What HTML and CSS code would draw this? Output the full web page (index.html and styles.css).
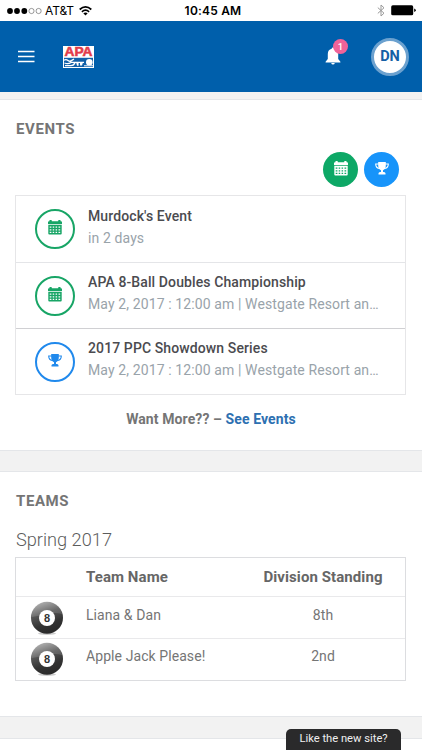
FILE: index.html
```html
<!DOCTYPE html>
<html lang="en">
<head>
<meta charset="utf-8">
<meta name="viewport" content="width=device-width, initial-scale=1">
<title>APA Member Services</title>
<link rel="stylesheet" href="styles.css">
</head>
<body>
<svg class="defs" aria-hidden="true">
  <symbol id="calendar" viewBox="0 0 14 15">
    <path fill="currentColor" fill-rule="evenodd" d="M0 2.2Q0 1.2 1 1.2H1.4V.5Q1.4 0 2 0H3.2Q3.8 0 3.8.5V1.2H10.2V.5Q10.2 0 10.8 0H12Q12.6 0 12.6.5V1.2H13Q14 1.2 14 2.2V4H0ZM.3 4.7H13.7V13.5Q13.7 14.5 12.7 14.5H1.3Q.3 14.5 .3 13.5ZM1.7 6.6V7.8H3.4V6.6ZM4.7 6.6V7.8H6.2V6.6ZM7.6 6.6V7.8H9.1V6.6ZM10.5 6.6V7.8H12.2V6.6ZM1.7 9.2V10.4H3.4V9.2ZM4.7 9.2V10.4H6.2V9.2ZM7.6 9.2V10.4H9.1V9.2ZM10.5 9.2V10.4H12.2V9.2ZM1.7 11.8V13H3.4V11.8ZM4.7 11.8V13H6.2V11.8ZM7.6 11.8V13H9.1V11.8ZM10.5 11.8V13H12.2V11.8Z"/>
  </symbol>
  <symbol id="trophy" viewBox="0 0 14 13">
    <path fill="none" stroke="currentColor" stroke-width="1.1" d="M4 2H.7Q.7 6.3 5 6.5M10 2H13.3Q13.3 6.3 9 6.5"/>
    <path fill="currentColor" d="M3.2 0H10.8V3.5Q10.8 7.2 8 8.2V10H9Q10.3 10.2 10.5 11.2V12.6H3.5V11.2Q3.7 10.2 5 10H6V8.2Q3.2 7.2 3.2 3.5Z"/>
  </symbol>
  <symbol id="ball" viewBox="0 0 34 35">
    <ellipse cx="17" cy="32.6" rx="9" ry="1.4" fill="#ccc"/>
    <circle cx="17" cy="16.8" r="16" fill="url(#shade)"/>
    <path fill="#fff" opacity=".13" d="M2 16A15 15 0 0 1 32 13Q25 11 17 13T2 16"/>
    <circle cx="17" cy="17" r="8" fill="#fff"/>
  </symbol>
  <linearGradient id="shade" x1=".25" y1="0" x2=".6" y2="1">
    <stop offset="0" stop-color="#aaa"/><stop offset=".38" stop-color="#555"/><stop offset=".7" stop-color="#333"/><stop offset="1" stop-color="#292929"/>
  </linearGradient>
</svg>

<div class="status">
  <div class="status-left">
    <svg width="36" height="8" viewBox="0 0 36 8"><g><circle cx="3" cy="4" r="2.9"/><circle cx="10" cy="4" r="2.9"/><circle cx="17.3" cy="4" r="2.9"/></g><g fill="none" stroke="#555" stroke-width=".6"><circle cx="24.5" cy="4" r="2.6"/><circle cx="31.6" cy="4" r="2.6"/></g></svg>
    <span class="carrier">AT&amp;T</span>
    <svg class="wifi" width="13" height="10" viewBox="0 0 13 10"><path fill="none" stroke="#000" stroke-width="1.7" d="M.7 3.5Q6.5-1.7 12.3 3.5M2.9 5.8Q6.5 2.6 10.1 5.8"/><path d="M4.3 7.3Q6.5 5.5 8.7 7.3L6.5 9.6Z"/></svg>
  </div>
  <span class="clock">10:45 AM</span>
  <div class="status-right">
    <svg width="8" height="13" viewBox="0 0 8 13"><path fill="none" stroke="#999" stroke-width="1" d="M.8 3.6 7 9.2 4 12V1L7 3.8.8 9.4"/></svg>
    <svg width="25" height="11" viewBox="0 0 25 11"><rect x=".2" y=".3" width="22" height="10" rx="1.6"/><path d="M23.2 3.5Q24.8 4 24.8 5.3T23.2 7.1Z"/></svg>
  </div>
</div>

<header class="header">
  <svg class="menu" width="17" height="13" viewBox="0 0 17 13"><path stroke="#fff" stroke-width="1.6" d="M0 1.5H16.5M0 6.5H16.5M0 11.5H16.5"/></svg>
  <svg class="logo" width="31" height="22" viewBox="0 0 31 22">
    <rect width="31" height="22" fill="#fff"/>
    <text x="15.5" y="10.4" text-anchor="middle" textLength="28" lengthAdjust="spacingAndGlyphs" class="logo-text">APA</text>
    <rect x="1" y="11.8" width="29" height="9.2" fill="#1260a8"/>
    <path fill="none" stroke="#fff" stroke-width="1.3" d="M1 14.2Q3 12.8 5 14.4T8.5 14.6L11 13M1.5 17Q5 18.6 8 16.4H21M2 19.6H8Q11 19.6 12 16.5"/>
    <path fill="#fff" d="M13.3 17H15.6V19.8H14ZM17 17H19.8L19 19.6H17Z"/>
    <circle cx="26.3" cy="16.3" r="3.3" fill="#fff"/><path stroke="#fff" stroke-width="1" d="M21 19.8H30"/>
  </svg>
  <div class="bell">
    <svg width="16" height="18" viewBox="0 0 16 18"><path fill="#fff" d="M6.7 1.8Q6.7.4 8 .4T9.3 1.8Q13.2 2.8 13.2 7V12L15.4 14.8V15.5H.6V14.8L2.8 12V7Q2.8 2.8 6.7 1.8ZM6.2 16H9.8Q9.5 17.6 8 17.6T6.2 16Z"/></svg>
    <span class="badge">1</span>
  </div>
  <div class="avatar">DN</div>
</header>

<main>
  <section class="panel events">
    <h2>EVENTS</h2>
    <div class="actions">
      <span class="action green"><svg width="14" height="15"><use href="#calendar"/></svg></span>
      <span class="action blue"><svg width="14" height="13"><use href="#trophy"/></svg></span>
    </div>
    <ul class="event-list">
      <li class="event">
        <span class="ring ring-green"><svg width="14" height="15"><use href="#calendar"/></svg></span>
        <div class="event-text"><h3>Murdock's Event</h3><p>in 2 days</p></div>
      </li>
      <li class="event">
        <span class="ring ring-green"><svg width="14" height="15"><use href="#calendar"/></svg></span>
        <div class="event-text"><h3>APA 8-Ball Doubles Championship</h3><p>May 2, 2017 : 12:00 am | Westgate Resort an…</p></div>
      </li>
      <li class="event">
        <span class="ring ring-blue"><svg width="14" height="13"><use href="#trophy"/></svg></span>
        <div class="event-text"><h3>2017 PPC Showdown Series</h3><p>May 2, 2017 : 12:00 am | Westgate Resort an…</p></div>
      </li>
    </ul>
    <p class="more">Want More?? – <a>See Events</a></p>
  </section>

  <section class="panel teams">
    <h2>TEAMS</h2>
    <h4>Spring 2017</h4>
    <div class="table">
      <div class="row head"><span></span><span>Team Name</span><span class="standing">Division Standing</span></div>
      <div class="row"><svg width="34" height="35"><use href="#ball"/><text x="17" y="21" text-anchor="middle" class="ball-number">8</text></svg><span>Liana &amp; Dan</span><span class="standing">8th</span></div>
      <div class="row"><svg width="34" height="35"><use href="#ball"/><text x="17" y="21" text-anchor="middle" class="ball-number">8</text></svg><span>Apple Jack Please!</span><span class="standing">2nd</span></div>
    </div>
  </section>
  <section class="panel next"></section>
</main>
<div class="feedback">Like the new site?</div>
</body>
</html>
```
FILE: styles.css
```css
* { box-sizing: border-box; margin: 0; padding: 0; }
body {
  width: 422px;
  height: 750px;
  overflow: hidden;
  background: #f2f2f2;
  color: #757575;
  font-family: Roboto, sans-serif;
  font-size: 14px;
}
svg { display: block; flex: none; }
.defs { position: absolute; width: 0; height: 0; }

.status {
  display: grid;
  grid-template-columns: 1fr auto 1fr;
  align-items: center;
  height: 21px;
  padding: 0 6px 0 7px;
  background: #fff;
  color: #000;
  font-family: Inter, sans-serif;
  font-size: 12px;
}
.status-left, .status-right { display: flex; align-items: center; }
.status-right { justify-content: flex-end; gap: 6px; }
.carrier { margin-left: 2px; letter-spacing: -.1px; }
.wifi { margin-left: 5px; }
.clock { padding-left: 3px; font-weight: 600; letter-spacing: .2px; }

.header {
  display: flex;
  align-items: center;
  height: 71px;
  padding: 0 13px 0 18px;
  background: #005fab;
}
.logo { margin-left: 28px; overflow: visible; }
.logo-text { font: 700 12px "Liberation Sans", sans-serif; fill: #e23b49; stroke: #e23b49; stroke-width: .5px; }
.bell { position: relative; margin: -2px 0 0 auto; }
.badge {
  position: absolute;
  left: 8px;
  top: -8px;
  width: 15px;
  height: 15px;
  border-radius: 50%;
  background: #f06399;
  color: #fff;
  font-size: 9.5px;
  font-weight: 500;
  line-height: 15px;
  text-align: center;
}
.avatar {
  width: 38px;
  height: 38px;
  margin-left: 30px;
  border: 3px solid #6ba1cf;
  border-radius: 50%;
  background: #fff;
  color: #1560a5;
  font-size: 14.5px;
  font-weight: 700;
  line-height: 32px;
  text-align: center;
}

.panel {
  padding: 0 16px 0 15px;
  border: solid #e4e6e9;
  border-width: 1px 0;
  background: #fff;
}
.events { height: 352px; margin-top: 7px; padding-top: 20px; }
.teams { height: 246px; margin-top: 20px; padding-top: 20px; }
.next { height: 40px; margin-top: 21px; }
h2 { padding-left: 1px; font-size: 15px; font-weight: 700; line-height: 18px; letter-spacing: .6px; color: #757575; }

.actions { display: flex; justify-content: flex-end; gap: 6px; margin: 14px 7px 8px 0; }
.action {
  display: flex;
  align-items: center;
  justify-content: center;
  width: 35px;
  height: 35px;
  border-radius: 50%;
  color: #fff;
}
.action svg { margin-bottom: 3px; }
.green { background: #0da866; }
.blue { background: #1794fa; }

.event-list { border: 1px solid #e6e6e8; list-style: none; }
.event { display: flex; align-items: center; height: 66px; padding: 0 20px 0 19px; }
.event + .event { border-top: 1px solid #e4e5e8; }
.event:last-child { border-color: #d0d0d3; }
.ring {
  display: flex;
  flex: none;
  align-items: center;
  justify-content: center;
  width: 40px;
  height: 40px;
  border: 2px solid;
  border-radius: 50%;
}
.ring svg { margin-bottom: 3px; }
.ring-green { color: #18a566; }
.ring-blue { color: #2089ec; }
.event-text { min-width: 0; margin: -5px 0 0 13px; letter-spacing: .11px; }
.event h3 { color: #4b4b4f; font-size: 14px; font-weight: 500; line-height: 22px; }
.event p { color: #99a3aa; line-height: 22px; white-space: nowrap; }
.more { margin-top: 13px; padding-left: 1px; font-weight: 700; line-height: 22px; letter-spacing: .1px; text-align: center; }
.more a { color: #2d70b1; }

h4 { margin: 19px 0 6px; padding-left: 1px; color: #5c5c5c; font-size: 18.2px; font-weight: 300; line-height: 22px; }
.table { border: 1px solid #dcdde0; }
.row {
  display: grid;
  grid-template-columns: 56px 155px 1fr;
  align-items: start;
  height: 42px;
  padding: 4px 0 0 14px;
  border-top: 1px solid #e9e9eb;
}
.row:last-child { padding-top: 3px; }
.row span { padding-top: 4px; line-height: 20px; letter-spacing: .08px; color: #757575; }
.row .standing { text-align: center; }
.row.head { height: 38px; padding-top: 0; border-top: 0; }
.head span { padding-top: 9px; color: #666; font-size: 15px; font-weight: 700; }
.ball-number { font: 700 11px "Liberation Sans", sans-serif; fill: #333; }

.feedback {
  position: absolute;
  left: 286px;
  top: 729px;
  width: 115px;
  height: 21px;
  border-radius: 5px 5px 0 0;
  background: #2a2a2b;
  color: #f0f0f0;
  font-size: 11.2px;
  line-height: 20px;
  text-align: center;
}
```
